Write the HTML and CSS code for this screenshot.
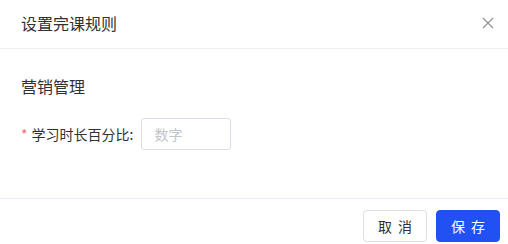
FILE: index.html
```html
<!DOCTYPE html>
<html lang="zh-CN">
<head>
    <meta charset="UTF-8">
    <meta name="viewport" content="width=device-width, initial-scale=1.0">
    <title>设置完课规则</title>
    <link rel="stylesheet" href="styles.css">
</head>
<body>
    <div class="dialog">
        <div class="dialog-header">
            <span class="dialog-title">设置完课规则</span>
            <button class="dialog-close" aria-label="关闭">
                <svg width="12" height="12" viewBox="0 0 12 12">
                    <path d="M1 1 L11 11 M11 1 L1 11" stroke="#909399" stroke-width="1.2" fill="none"/>
                </svg>
            </button>
        </div>

        <div class="dialog-body">
            <div class="section-title">营销管理</div>
            <div class="form-row">
                <label class="form-label"><span class="required">*</span>学习时长百分比:</label>
                <input class="form-input" type="text" placeholder="数字">
            </div>
        </div>

        <div class="dialog-footer">
            <button class="btn">取消</button>
            <button class="btn btn-primary">保存</button>
        </div>
    </div>
</body>
</html>
```

FILE: styles.css
```css
* {
    margin: 0;
    padding: 0;
    box-sizing: border-box;
    font-family: 'Noto Sans CJK SC', 'Noto Sans', sans-serif;
}

body {
    background-color: #fff;
    color: #303133;
    overflow: hidden;
}

.dialog {
    width: 508px;
    height: 244px;
    background-color: #fff;
}

.dialog-header {
    display: flex;
    justify-content: space-between;
    align-items: center;
    height: 49px;
    padding: 0 14px 2px 21px;
    border-bottom: 1px solid #ebeef5;
}

.dialog-title {
    font-size: 16px;
    line-height: 24px;
    color: #303133;
}

.dialog-close {
    display: flex;
    align-items: center;
    justify-content: center;
    width: 12px;
    height: 12px;
    border: none;
    background: none;
    cursor: pointer;
}

.dialog-body {
    height: 149px;
    padding: 25px 21px 0;
}

.section-title {
    font-size: 16px;
    line-height: 24px;
    color: #303133;
    margin-bottom: 20px;
}

.form-row {
    display: flex;
    align-items: center;
}

.form-label {
    font-size: 14px;
    color: #303133;
    margin-right: 8px;
}

.required {
    color: #f56c6c;
    margin-right: 4px;
}

.form-input {
    width: 90px;
    height: 32px;
    padding: 0 12px;
    border: 1px solid #dcdfe6;
    border-radius: 3px;
    font-size: 14px;
    color: #606266;
    outline: none;
}

.form-input::placeholder {
    color: #c0c4cc;
}

.dialog-footer {
    display: flex;
    justify-content: flex-end;
    gap: 9px;
    padding: 11px 8px 0;
    border-top: 1px solid #ebeef5;
}

.btn {
    width: 64px;
    height: 32px;
    padding-left: 6px;
    border: 1px solid #dcdfe6;
    border-radius: 4px;
    background-color: #fff;
    color: #303133;
    font-size: 14px;
    letter-spacing: 6px;
    cursor: pointer;
}

.btn-primary {
    background-color: #2251f3;
    border-color: #2251f3;
    color: #fff;
}
```
